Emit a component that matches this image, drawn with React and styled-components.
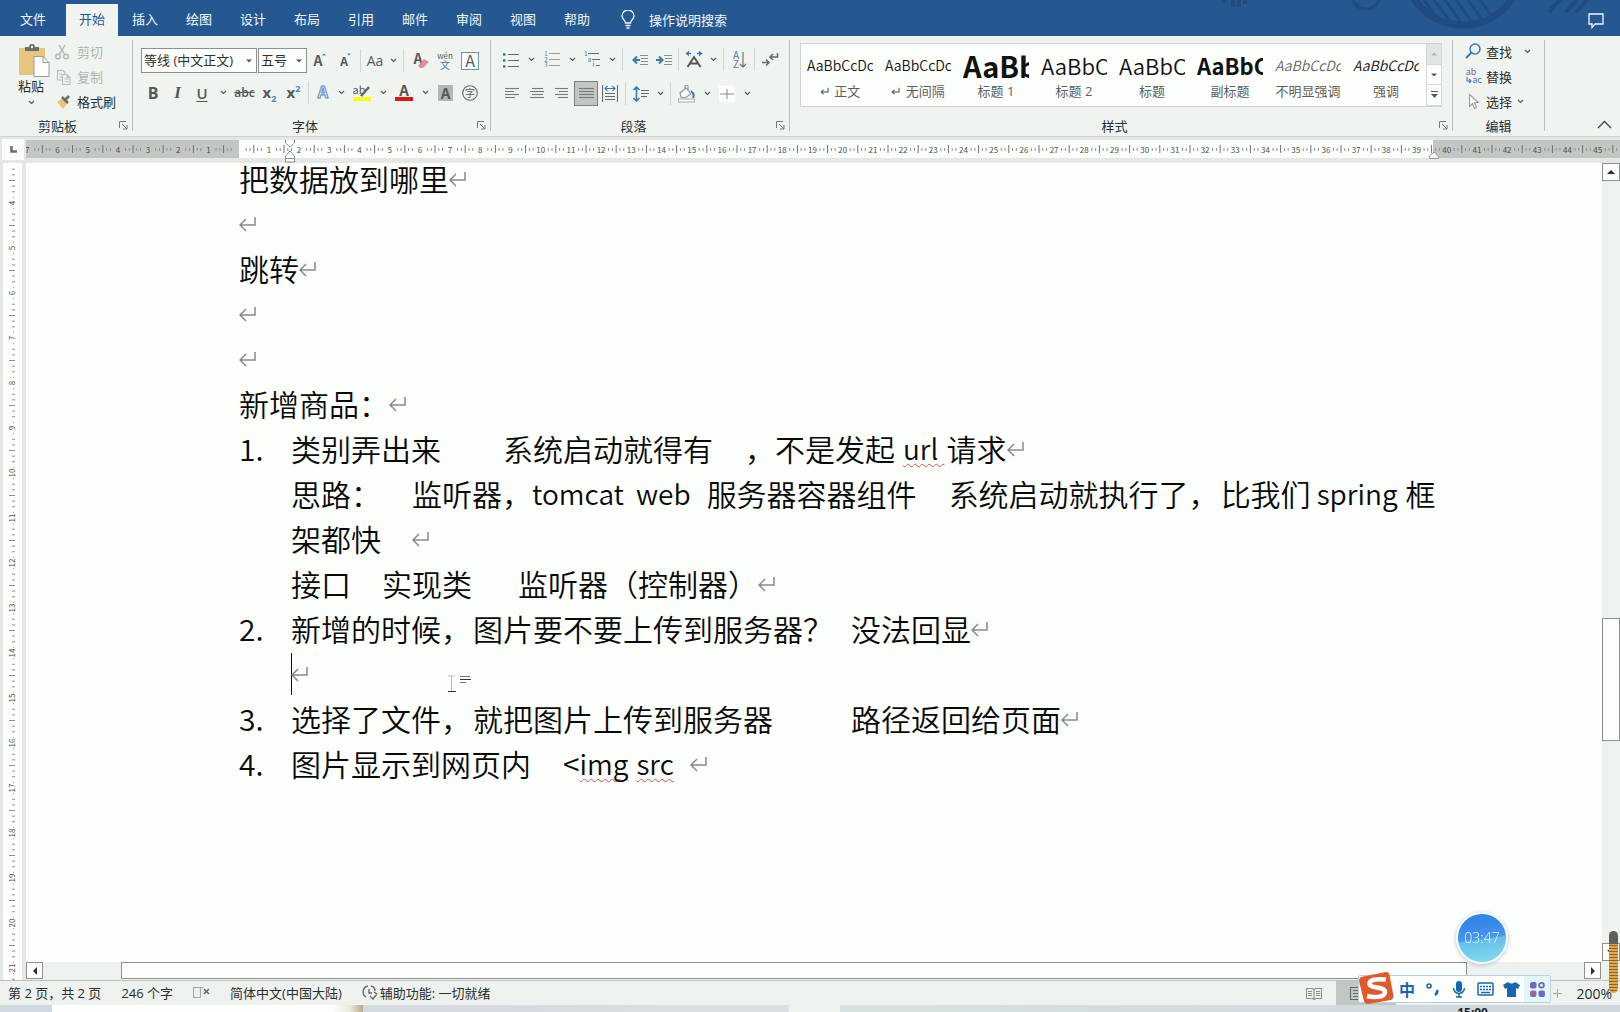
import React from 'react';
import styled, { createGlobalStyle, css } from 'styled-components';

const CJK = '"Noto Sans CJK SC", "Noto Sans", sans-serif';
const UI = '"Open Sans", "Noto Sans CJK SC", sans-serif';

const Global = createGlobalStyle`
  *, *::before, *::after { box-sizing: border-box; }
  body { margin: 0; background: #fdfffd; font-family: ${UI}; font-size: 13px; color: #2b2f2d; overflow: hidden; }
  button { font: inherit; color: inherit; background: none; border: 0; padding: 0; margin: 0; }
  svg { display: block; flex: none; }
`;

const Shell = styled.div`
  display: flex;
  flex-direction: column;
  height: 100vh;
  overflow: hidden;
`;

/* ---------- title / tabs ---------- */
const Header = styled.header`
  position: relative;
  display: flex;
  align-items: flex-end;
  justify-content: space-between;
  height: 36px;
  flex: none;
  background: #255791;
  color: #f1f7fb;
`;
const Decor = styled.svg`
  position: absolute;
  right: 0;
  top: 0;
`;
const Tabs = styled.nav`
  display: flex;
  align-items: stretch;
  height: 32px;
`;
const Tab = styled.button`
  width: ${(p) => p.$w || 54}px;
  line-height: 30px;
  padding-bottom: 2px;
  ${(p) => p.$active && css`background: #f0f4f1; color: #255791;`}
`;
const Tell = styled.button`
  display: flex;
  align-items: center;
  gap: 14px;
  padding: 0 0 2px 17px;
`;
const CommentButton = styled.button`
  position: relative;
  padding: 0 16px 7px 0;
`;

/* ---------- ribbon ---------- */
const Ribbon = styled.section`
  display: flex;
  height: 101px;
  flex: none;
  padding: 4px 0 5px;
  background: #f0f4f1;
  border-bottom: 1px solid #cfd3d0;
`;
const Group = styled.div`
  display: flex;
  flex-direction: column;
  flex: 0 0 ${(p) => p.$w}px;
  min-width: 0;
  padding-left: ${(p) => p.$pad || 0}px;
  border-right: 1px solid #b9bdba;
`;
const GroupBody = styled.div`
  display: flex;
  flex-direction: ${(p) => (p.$col ? 'column' : 'row')};
  flex: 1;
`;
const GroupFoot = styled.div`
  display: flex;
  align-items: center;
  height: 11px;
  margin-left: -${(p) => p.$pad || 0}px;
  padding-right: 4px;
  span { flex: 1; text-align: center; line-height: 18px; }
`;
const ToolRow = styled.div`
  display: flex;
  align-items: center;
  height: 25px;
  margin-top: ${(p) => p.$top}px;
`;
const Tool = styled.button`
  display: flex;
  align-items: center;
  justify-content: center;
  width: ${(p) => p.$w || 24}px;
  height: 25px;
  flex: none;
  color: #555957;
  font-size: ${(p) => p.$size || 16}px;
  line-height: 20px;
  ${(p) => p.$selected && css`background: #c3c7c4; border: 1px solid #7d817e;`}
`;
const Sep = styled.span`
  width: 1px;
  height: 23px;
  margin: 0 3px;
  background: #d3d7d4;
  flex: none;
`;
const Bold = styled.b`font-size: 16px;`;
const Ital = styled.i`font: italic bold 17px "Liberation Serif", serif;`;
const Under = styled.u`font-weight: 600; font-size: 15px; text-underline-offset: 2px;`;
const Struck = styled.s`font-size: 12px; font-weight: 600;`;
const Script = styled.span`
  font-weight: 700;
  font-size: 15px;
  line-height: 16px;
  padding-bottom: 2px;
  sub, sup { font-size: 9px; line-height: 0; color: #4a84bd; }
`;
const Combo = styled.div`
  display: flex;
  align-items: center;
  width: ${(p) => p.$w}px;
  height: 25px;
  margin-right: ${(p) => p.$gap || 0}px;
  padding-right: 4px;
  border: 1px solid #8d918e;
  background: #fdfffd;
`;
const ComboSelect = styled.select`
  appearance: none;
  flex: 1;
  min-width: 0;
  height: 23px;
  padding: 0 0 1px 2px;
  border: 0;
  background: none;
  font: 13px ${UI};
  color: #2b2f2d;
`;

const PasteButton = styled.button`
  display: flex;
  flex-direction: column;
  align-items: center;
  width: 38px;
  padding-top: 4px;
  span { line-height: 19px; padding-right: 6px; }
  svg:last-child { margin: 4px 6px 0 0; }
`;
const Stack = styled.div`
  display: flex;
  flex-direction: column;
  margin-top: -1px;
`;
const MiniButton = styled.button`
  display: flex;
  align-items: center;
  gap: ${(p) => p.$gap || 4}px;
  height: 25px;
  white-space: nowrap;
  color: ${(p) => (p.$off ? '#b1b5b2' : '#2b2f2d')};
  svg:last-child:not(:first-child) { margin-left: ${(p) => p.$chev || 0}px; }
`;

const Gallery = styled.div`
  display: flex;
  height: 64px;
  width: 642px;
  margin-top: 3px;
  background: #fdfffd;
  border: 1px solid #cfd3d0;
  border-right: 0;
`;
const GalleryItems = styled.div`
  display: flex;
  flex: 1;
  overflow: hidden;
`;
const StyleCard = styled.button`
  display: flex;
  flex-direction: column;
  align-items: center;
  width: 78px;
  flex: none;
  padding-top: 5px;
  color: #5c605d;
  small { font-size: 13px; line-height: 18px; white-space: nowrap; }
`;
const Sample = styled.span`
  display: block;
  width: 66px;
  height: 33px;
  overflow: hidden;
  text-align: left;
  white-space: nowrap;
  font-family: ${CJK};
  font-size: ${(p) => p.$size}px;
  font-weight: ${(p) => p.$weight || 350};
  font-style: ${(p) => (p.$italic ? 'italic' : 'normal')};
  line-height: 32px;
  color: ${(p) => p.$color || '#111'};
`;
const GallerySide = styled.div`
  display: flex;
  flex-direction: column;
  width: 16px;
`;
const SideButton = styled.button`
  display: flex;
  flex: 1;
  align-items: center;
  justify-content: center;
  border: 1px solid #d6dad7;
  border-width: 0 1px 1px;
  background: ${(p) => (p.$off ? '#e2e6e3' : '#fdfffd')};
`;
const RibbonEnd = styled.div`
  display: flex;
  flex: 1;
  align-items: flex-end;
  justify-content: flex-end;
  padding: 0 8px 0 0;
  button { height: 14px; }
`;

/* ---------- workspace ---------- */
const RulerBar = styled.div`
  display: flex;
  height: 26px;
  flex: none;
  padding: 3px 0 0 2px;
  background: #e4e8e5;
  overflow: hidden;
`;
const TabStop = styled.button`
  display: flex;
  align-items: center;
  justify-content: center;
  width: 22px;
  height: 21px;
  margin: -1px 2px 0 0;
  flex: none;
  background: #fdfffd;
`;
const RulerTrack = styled.div`
  flex: 1;
  min-width: 0;
  height: 23px;
  overflow: hidden;
`;
const Work = styled.div`
  display: flex;
  flex: 1;
  min-height: 0;
`;
const SideRuler = styled.aside`
  width: 26px;
  flex: none;
  padding-left: 3px;
  background: #e4e8e5;
  overflow: hidden;
`;
const Center = styled.div`
  display: flex;
  flex-direction: column;
  flex: 1;
  min-width: 0;
`;
const Page = styled.main`
  flex: 1;
  min-height: 0;
  overflow: hidden;
  padding-left: 213px;
  background: #fdfffd;
`;
const Story = styled.div`
  margin-top: -7px;
  font-family: ${CJK};
  font-size: 30px;
  font-weight: 350;
  color: #080a08;
`;
const Line = styled.div`
  display: flex;
  align-items: center;
  height: 45px;
  line-height: 45px;
  white-space: pre;
  padding-left: ${(p) => (p.$cont ? 52 : 0)}px;
`;
const Num = styled.span`
  width: 52px;
  flex: none;
`;
const Gap = styled.span`
  width: ${(p) => p.$w}px;
  flex: none;
`;
const Latin = styled.span`
  font-size: 28px;
  ${(p) => p.$wavy && css`
    text-decoration: underline wavy #c9504c 1px;
    text-underline-offset: 3px;
    text-decoration-skip-ink: none;
  `}
`;
const Caret = styled.span`
  width: 1px;
  height: 42px;
  margin-right: -1px;
  background: #101210;
`;
const Pointer = styled.svg`
  margin-left: 140px;
  margin-top: 20px;
`;
const VScroll = styled.div`
  display: flex;
  flex-direction: column;
  justify-content: space-between;
  width: 18px;
  flex: none;
  padding: 0 0 19px;
  background: #eef2ef;
`;
const VTrack = styled.div`
  flex: 1;
  padding-top: 437px;
`;
const VThumb = styled.div`
  height: 123px;
  border: 1px solid #8d918e;
  background: #fdfffd;
`;
const HScroll = styled.div`
  display: flex;
  height: 18px;
  flex: none;
  padding-right: 1px;
  background: #eef2ef;
`;
const HTrack = styled.div`
  flex: 1;
  padding: 0 117px 0 78px;
`;
const HThumb = styled.div`
  height: 17px;
  border: 1px solid #8d918e;
  background: #fdfffd;
`;
const ArrowButton = styled.button`
  display: flex;
  align-items: center;
  justify-content: center;
  width: ${(p) => (p.$v ? 18 : 17)}px;
  height: ${(p) => (p.$v ? 18 : 17)}px;
  flex: none;
  border: 1px solid #8d918e;
  background: #fdfffd;
`;

/* ---------- status bar ---------- */
const Status = styled.footer`
  display: flex;
  align-items: center;
  height: 25px;
  flex: none;
  padding: 0 8px;
  background: #eef2ef;
  border-top: 1px solid #bcc0bd;
  white-space: nowrap;
`;
const StatusItem = styled.button`
  display: flex;
  align-items: center;
  gap: 2px;
  padding-bottom: 1px;
  margin-right: ${(p) => p.$gap || 20}px;
`;
const ViewButton = styled.button`
  display: flex;
  align-items: center;
  width: ${(p) => (p.$on ? 60 : 30)}px;
  height: 24px;
  padding-left: ${(p) => (p.$on ? 14 : 0)}px;
  background: ${(p) => (p.$on ? '#c3c7c4' : 'none')};
`;
const Push = styled.span`flex: 1;`;
const Zoom = styled.span`
  display: flex;
  align-items: center;
  justify-content: flex-end;
  gap: 14px;
  width: 216px;
  font-size: 14px;
`;
const Taskbar = styled.div`
  display: flex;
  height: 7px;
  flex: none;
  overflow: hidden;
  background: #d3d9e0;
`;
const TaskPart = styled.div`
  flex: ${(p) => (p.$w ? `0 0 ${p.$w}px` : '1')};
  background: ${(p) => p.$bg};
`;
const TaskClock = styled.time`
  display: block;
  padding: 0 132px 0 0;
  text-align: right;
  font: bold 12px/16px "Noto Sans", sans-serif;
  color: #222;
`;

/* ---------- floating widgets ---------- */
const Timer = styled.div`
  position: fixed;
  right: 112px;
  bottom: 48px;
  width: 52px;
  height: 52px;
  border: 2px solid #eefaff;
  border-radius: 50%;
  background: linear-gradient(172deg, #3585ea 0 20%, #4896ee 50%, #65c0ea 54%, #86dcec 100%);
  box-shadow: 0 1px 4px rgba(60, 90, 110, 0.35);
  color: #eefaff;
  font: 300 14px/47px "Open Sans", sans-serif;
  text-align: center;
`;
const Ime = styled.div`
  position: fixed;
  right: 69px;
  bottom: 9px;
  display: flex;
  align-items: center;
  height: 28px;
  padding-left: 35px;
  border: 1px solid #b9cfe3;
  border-radius: 2px;
  background: #fdfffd;
  color: #1467b0;
`;
const ImeKey = styled.button`
  display: flex;
  align-items: center;
  justify-content: center;
  width: 26px;
  height: 26px;
  font-size: 16px;
  font-weight: 700;
  background: ${(p) => (p.$tint ? '#e2f6f6' : 'none')};
`;
const ImeLogo = styled.svg`
  position: absolute;
  left: -1px;
  top: -5px;
`;
const Gauge = styled.div`
  position: fixed;
  right: 2px;
  bottom: 19px;
  width: 9px;
  height: 62px;
  border-radius: 5px;
  background: linear-gradient(#5e605f 0 13px, transparent 13px),
    repeating-linear-gradient(#e0a84c 0 2px, #8c6528 2px 3px);
`;

/* ---------- drawings ---------- */
const Chev = ({ c = '#555957' }) => (
  <svg width="7" height="5" viewBox="0 0 7 5"><path d="M1 1l2.5 2.5L6 1" fill="none" stroke={c} strokeWidth="1.1" /></svg>
);
const Tri = ({ d = 'down', c = '#2b2f2d', s = 8 }) => {
  const paths = { down: 'M0 2h8L4 6z', up: 'M0 6h8L4 2z', left: 'M6 0v8L2 4z', right: 'M2 0v8l4-4z' };
  return <svg width={s} height={s} viewBox="0 0 8 8"><path d={paths[d]} fill={c} /></svg>;
};
const ChevTool = ({ w = 14 }) => <Tool $w={w} aria-label="更多"><Chev /></Tool>;
const Launcher = () => (
  <button aria-label="对话框">
    <svg width="9" height="9" viewBox="0 0 9 9" fill="none" stroke="#777b78"><path d="M.5 7V.5H7M3 3l5 5M8 4v4H4" /></svg>
  </button>
);
const Mark = () => (
  <svg width="17" height="16" viewBox="0 0 17 16" fill="none" stroke="#868a87" strokeWidth="1.5">
    <path d="M16 1v8H1M7 3L1 9l6 6" />
  </svg>
);
const Icon = ({ w = 17, h = 17, children }) => (
  <svg width={w} height={h} viewBox={`0 0 ${w} ${h}`} fill="none" stroke="#666a67" strokeWidth="1.1" fontFamily={CJK}>{children}</svg>
);
const Glyph = ({ x, y, s, c = '#555957', b, o, children }) => (
  <text x={x} y={y} fontSize={s} fill={o ? 'none' : c} stroke={o ? c : 'none'} fontWeight={b ? 700 : 400} textAnchor="middle">{children}</text>
);
const Lines = ({ rows }) => (
  <Icon w={15} h={15}>{rows.map(([a, b], i) => <path key={i} d={`M${a} ${i * 3 + 2.5}H${b}`} stroke="#777b78" />)}</Icon>
);

const STEP = 30.2;
const ZERO = 212.7;
const HRuler = () => {
  const items = [];
  for (let i = -56; i <= 370; i++) {
    const x = ZERO + (i * STEP) / 8;
    const m = ((i % 8) + 8) % 8;
    if (m === 0) {
      if (i !== 0) items.push(<text key={i} x={x} y="12.5" fontSize="8" fill="#4c504d" textAnchor="middle">{Math.abs(i / 8)}</text>);
    } else if (m === 4) items.push(<path key={i} d={`M${x} 5v8`} stroke="#6d716e" />);
    else if (m !== 1 && m !== 7) items.push(<path key={i} d={`M${x} 8v3`} stroke="#8d918e" />);
  }
  return (
    <svg width="1594" height="23" fontFamily={CJK}>
      <rect width="1594" height="18" fill="#c3c7c4" />
      <rect x="213" width="1194" height="18" fill="#fdfffd" />
      {items}
      <g fill="#fdfffd" stroke="#8d918e">
        <path d="M259.500 -1h9v4l-4.500 4-4.500-4z" />
        <path d="M259.500 18v-2l4.500-5 4.500 5v6h-9zM259.500 18.500h9" />
        <path d="M1403.500 18v-2l4.500-4 4.500 4v2.500h-9z" />
      </g>
    </svg>
  );
};
const VRuler = () => {
  const items = [];
  for (let i = 26; i <= 170; i++) {
    const y = 40 + ((i - 32) * 45) / 8;
    const m = i % 8;
    if (m === 0) items.push(<text key={i} transform={`translate(12 ${y}) rotate(-90)`} fontSize="8" fill="#4c504d" textAnchor="middle">{i / 8}</text>);
    else if (m === 4) items.push(<path key={i} d={`M6 ${y}h6`} stroke="#8d918e" />);
    else if (m !== 1 && m !== 7) items.push(<path key={i} d={`M9 ${y}h3`} stroke="#8d918e" />);
    else items.push(<path key={i} d={`M10 ${y}h1`} stroke="#8d918e" />);
  }
  return (
    <svg width="19" height="817" fontFamily={CJK}>
      <rect width="19" height="817" fill="#fdfffd" />
      {items}
    </svg>
  );
};

const styles = [
  ['AaBbCcDc', '↵ 正文', { $size: 14 }],
  ['AaBbCcDc', '↵ 无间隔', { $size: 14 }],
  ['AaBb', '标题 1', { $size: 29, $weight: 700 }],
  ['AaBbC', '标题 2', { $size: 22 }],
  ['AaBbC', '标题', { $size: 22 }],
  ['AaBbC', '副标题', { $size: 22, $weight: 700 }],
  ['AaBbCcDc', '不明显强调', { $size: 14, $italic: true, $color: '#666' }],
  ['AaBbCcDc', '强调', { $size: 14, $italic: true }],
];

export default function App() {
  return (
    <Shell>
      <Global />
      <Header>
        <Decor width="420" height="36" fill="none" stroke="#1f4b80" aria-hidden="true">
          <circle cx="263" cy="-34" r="59" strokeWidth="7" />
          <path d="M224 0l16 22M234 0l18 24M245 0l17 24M256 0l17 24M268 0l15 21M280 0l12 17" strokeWidth="3" />
          <circle cx="166" cy="-5" r="14" strokeWidth="3" />
          <path d="M33 0v7M39 0v7M45 0v4M24 0v3M349 12l14-16M366 12l18-20M376 12l18-20" strokeWidth="4" />
        </Decor>
        <Tabs>
          <Tab $w={66}>文件</Tab>
          <Tab $w={52} $active>开始</Tab>
          {['插入', '绘图', '设计', '布局', '引用', '邮件', '审阅', '视图', '帮助'].map((t) => <Tab key={t}>{t}</Tab>)}
          <Tell>
            <svg width="14" height="19" viewBox="0 0 14 19" fill="none" stroke="#f1f7fb" strokeWidth="1.3">
              <path d="M4.500 13C4.500 10 1 9.500 1 6a6 6 0 0 1 12 0c0 3.500-3.500 4-3.500 7zM4.500 15.500h5M5.500 18h3" />
            </svg>
            <span>操作说明搜索</span>
          </Tell>
        </Tabs>
        <CommentButton aria-label="批注">
          <svg width="16" height="17" viewBox="0 0 16 17" fill="none" stroke="#f1f7fb" strokeWidth="1.3"><path d="M1 2h14v10H7l-3 3.500V12H1z" /></svg>
        </CommentButton>
      </Header>

      <Ribbon>
        <Group $w={133} $pad={15}>
          <GroupBody>
            <PasteButton>
              <svg width="32" height="33" viewBox="0 0 32 33">
                <rect x="1" y="4" width="26" height="27" fill="#e6c57f" />
                <path d="M7 7V3h4a3 3 0 0 1 6 0h4v4z" fill="#6a6e6b" /><circle cx="14" cy="3" r="1.200" fill="#f0f4f1" />
                <path d="M16 12.500h9l6 6v14H16z" fill="#fdfffd" stroke="#9a9e9b" /><path d="M25 12.500v6h6" fill="none" stroke="#9a9e9b" />
              </svg>
              <span>粘贴</span>
              <Chev />
            </PasteButton>
            <Stack>
              <MiniButton $off $gap={6}>
                <Icon w={18} h={16}><g stroke="#b1b5b2" strokeWidth="1.400"><path d="M6 1l6 10M12 1L6 11" /><circle cx="5" cy="12.500" r="2.300" /><circle cx="13" cy="12.500" r="2.300" /></g></Icon>剪切
              </MiniButton>
              <MiniButton $off $gap={6}>
                <Icon w={18} h={16}><g stroke="#b9bdba"><path d="M9 11H4.500V1.500H10l2 2V5M6 5h3M6 8h3" /><path d="M9.500 5.500H14l3 3v7H9.500zM14 5.500v3h3M11.500 10h4M11.500 12.500h4" /></g></Icon>复制
              </MiniButton>
              <MiniButton $gap={6}>
                <Icon w={18} h={16}><path d="M4 8l6-4 5 5-5 6z" fill="#e6c57f" stroke="none" /><path d="M9 3l6 6M12 6l4-4" stroke="#6a6e6b" strokeWidth="2.600" /></Icon>格式刷
              </MiniButton>
            </Stack>
          </GroupBody>
          <GroupFoot $pad={19}><span>剪贴板</span><Launcher /></GroupFoot>
        </Group>

        <Group $w={358} $pad={8}>
          <GroupBody $col>
            <ToolRow $top={8}>
              <Combo $w={116} $gap={1}>
                <ComboSelect aria-label="字体"><option>等线 (中文正文)</option></ComboSelect><Tri s={6} c="#555957" />
              </Combo>
              <Combo $w={49}>
                <ComboSelect aria-label="字号"><option>五号</option></ComboSelect><Tri s={6} c="#555957" />
              </Combo>
              <Tool $w={25} aria-label="增大字号"><Icon><Glyph x={7} y={14} s={14} b>A</Glyph><path d="M11 3.500l2-2 2 2" fill="#4a84bd" stroke="none" /></Icon></Tool>
              <Tool $w={25} aria-label="减小字号"><Icon><Glyph x={8} y={14} s={12} b>A</Glyph><path d="M11 1.500l2 2 2-2" fill="#4a84bd" stroke="none" /></Icon></Tool>
              <Sep />
              <Tool $w={22} $size={14}>Aa</Tool><ChevTool />
              <Sep />
              <Tool $w={26} aria-label="清除格式"><Icon><Glyph x={6} y={12} s={14} b>A</Glyph><path d="M6 14l6-7 5 3-6 6H8z" fill="#e58a9b" stroke="none" /></Icon></Tool>
              <Tool $w={24} aria-label="拼音指南"><Icon w={18} h={20}><Glyph x={9} y={8} s={8}>wén</Glyph><Glyph x={9} y={18} s={10} c="#3c78b4">文</Glyph></Icon></Tool>
              <Tool $w={26} aria-label="字符边框"><Icon w={18} h={18}><rect x=".5" y=".5" width="17" height="17" stroke="#6a93bd" fill="#fdfffd" /><Glyph x={9} y={15} s={16}>A</Glyph></Icon></Tool>
            </ToolRow>
            <ToolRow $top={7}>
              <Tool><Bold>B</Bold></Tool>
              <Tool $w={25}><Ital>I</Ital></Tool>
              <Tool><Under>U</Under></Tool>
              <ChevTool w={18} />
              <Tool $w={25}><Struck>abc</Struck></Tool>
              <Tool $w={25}><Script>x<sub>2</sub></Script></Tool>
              <Tool $w={23}><Script>x<sup>2</sup></Script></Tool>
              <Sep />
              <Tool $w={22} aria-label="文本效果"><Icon w={16}><Glyph x={8} y={14} s={16} c="#5c93cb" o b>A</Glyph></Icon></Tool>
              <ChevTool />
              <Tool $w={28} aria-label="突出显示"><Icon w={18} h={18}><Glyph x={6} y={10} s={11}>ab</Glyph><path d="M8 12l8-9" strokeWidth="2.600" /><rect y="13" width="18" height="4" fill="#fbfb0a" stroke="none" /></Icon></Tool>
              <ChevTool />
              <Tool $w={28} aria-label="字体颜色"><Icon w={18} h={18}><Glyph x={9} y={12} s={15} b>A</Glyph><rect y="13" width="18" height="4" fill="#e31414" stroke="none" /></Icon></Tool>
              <ChevTool />
              <Tool $w={26} aria-label="字符底纹"><Icon w={15} h={16}><rect width="15" height="16" fill="#b3b7b4" stroke="none" /><Glyph x={7.5} y={14} s={15} b>A</Glyph></Icon></Tool>
              <Tool $w={24} aria-label="带圈字符"><Icon w={16} h={16}><circle cx="8" cy="8" r="7.300" /><Glyph x={8} y={12} s={10}>字</Glyph></Icon></Tool>
            </ToolRow>
          </GroupBody>
          <GroupFoot $pad={8}><span>字体</span><Launcher /></GroupFoot>
        </Group>

        <Group $w={299} $pad={8}>
          <GroupBody $col>
            <ToolRow $top={7}>
              <Tool aria-label="项目符号"><Icon w={16} h={16}><path d="M5 2.500h11M5 8.500h11M5 14.500h11" /><path d="M0 2.500h2.500M0 8.500h2.500M0 14.500h2.500" stroke="#3c78b4" strokeWidth="2.500" /></Icon></Tool>
              <ChevTool w={16} />
              <Tool $w={26} aria-label="编号"><Icon w={16} h={17}><path d="M5 2.500h11M5 8.500h11M5 14.500h11" stroke="#9a9e9b" /><Glyph x={2} y={5} s={6} c="#3c78b4">1</Glyph><Glyph x={2} y={11} s={6} c="#3c78b4">2</Glyph><Glyph x={2} y={16} s={6} c="#3c78b4">3</Glyph></Icon></Tool>
              <ChevTool />
              <Tool $w={26} aria-label="多级列表"><Icon w={16} h={17}><path d="M4 2.500h11M8 8.500h8M12 14.500h4" /><Glyph x={2} y={5} s={6}>1</Glyph><Glyph x={5.5} y={11} s={6} c="#3c78b4">a</Glyph><Glyph x={9.5} y={16} s={6}>i</Glyph></Icon></Tool>
              <ChevTool />
              <Sep />
              <Tool $w={27} aria-label="减少缩进"><Icon w={16} h={12}><path d="M8 1.500h8M9 4.500h7M9 7.500h7M8 10.500h8" stroke="#8d918e" /><path d="M8 6H2M5 2.500L1.500 6 5 9.500" stroke="#3c78b4" strokeWidth="2" /></Icon></Tool>
              <Tool $w={22} aria-label="增加缩进"><Icon w={16} h={12}><path d="M8 1.500h8M9 4.500h7M9 7.500h7M8 10.500h8" stroke="#8d918e" /><path d="M0 6h6M3 2.500L6.500 6 3 9.500" stroke="#3c78b4" strokeWidth="2" /></Icon></Tool>
              <Sep />
              <Tool aria-label="中文版式"><Icon w={18} h={17}><path d="M2.500 16L9 6l6.500 10M5 12.500h8" stroke="#555957" strokeWidth="2" /><path d="M6 2.500H1.500M4 .5l-2.500 2 2.500 2M12 2.500h4.500M14 .5l2.500 2-2.500 2" stroke="#3c78b4" strokeWidth="1.400" /></Icon></Tool>
              <ChevTool />
              <Sep />
              <Tool aria-label="排序"><Icon w={14} h={18}><Glyph x={4} y={8} s={10} c="#3c78b4">A</Glyph><Glyph x={4} y={17} s={10} c="#9660a8">Z</Glyph><path d="M11 1v15M8 13l3 3 3-3" /></Icon></Tool>
              <Sep />
              <Tool aria-label="显示编辑标记"><Icon w={17} h={15}><path d="M15.500 1v4H8M11 2L8 5l3 3M0 10.500h7M4 7.500l3 3-3 3" strokeWidth="1.500" /></Icon></Tool>
            </ToolRow>
            <ToolRow $top={9}>
              <Tool $w={26} aria-label="左对齐"><Lines rows={[[0, 14], [0, 9], [0, 14], [0, 10]]} /></Tool>
              <Tool aria-label="居中"><Lines rows={[[2, 13], [0, 14], [2, 13], [0, 14]]} /></Tool>
              <Tool $w={25} aria-label="右对齐"><Lines rows={[[1, 14], [5, 14], [1, 14], [4, 14]]} /></Tool>
              <Tool $selected aria-label="两端对齐"><Lines rows={[[0, 15], [0, 15], [0, 15], [0, 15]]} /></Tool>
              <Tool aria-label="分散对齐"><Icon w={16} h={17}><path d="M.5 0v17M15.500 0v17M3 8.500h10M3 11.500h10M3 14.500h10" /><path d="M3 3.500h10M5.500 1L3 3.500 5.500 6M10.500 1L13 3.500 10.500 6" stroke="#3c78b4" /></Icon></Tool>
              <Sep />
              <Tool aria-label="行距"><Icon w={16} h={16}><path d="M8 4.500h8M8 7.500h8M8 10.500h6" /><path d="M3.500 1v14M.5 4l3-3 3 3M.5 12l3 3 3-3" stroke="#3c78b4" strokeWidth="1.600" /></Icon></Tool>
              <ChevTool />
              <Sep />
              <Tool $w={26} aria-label="底纹"><Icon w={18} h={18}><path d="M2 8l6-5 5 6-6 4-4-1zM7 5V1.500a1.500 1.500 0 0 1 3 0V5" stroke="#8d918e" fill="#fdfffd" /><path d="M13 6q4 3 2 7" stroke="#3c78b4" strokeWidth="2" /><rect x=".5" y="14" width="16" height="3" fill="#fdfffd" stroke="#b1b5b2" /></Icon></Tool>
              <ChevTool />
              <Tool $w={26} aria-label="边框"><Icon w={16} h={16}><rect width="16" height="16" fill="#fdfffd" stroke="none" /><path d="M8 3v10M1 8h14" stroke="#8d918e" /></Icon></Tool>
              <ChevTool />
            </ToolRow>
          </GroupBody>
          <GroupFoot $pad={8}><span>段落</span><Launcher /></GroupFoot>
        </Group>

        <Group $w={663} $pad={10}>
          <GroupBody>
            <Gallery>
              <GalleryItems>
                {styles.map(([s, n, p]) => (
                  <StyleCard key={n}><Sample {...p}>{s}</Sample><small>{n}</small></StyleCard>
                ))}
              </GalleryItems>
              <GallerySide>
                <SideButton $off aria-label="上一行"><Tri d="up" s={6} c="#b1b5b2" /></SideButton>
                <SideButton aria-label="下一行"><Tri s={6} c="#555957" /></SideButton>
                <SideButton aria-label="其他"><svg width="7" height="8" viewBox="0 0 7 8"><path d="M0 0h7v1H0zM0 3h7L3.500 7z" fill="#555957" /></svg></SideButton>
              </GallerySide>
            </Gallery>
          </GroupBody>
          <GroupFoot $pad={10}><span>样式</span><Launcher /></GroupFoot>
        </Group>

        <Group $w={92} $pad={12}>
          <GroupBody>
            <Stack>
              <MiniButton $chev={8}>
                <Icon><circle cx="10" cy="6" r="5" stroke="#3c78b4" strokeWidth="1.500" /><path d="M6.500 9.500L1 15" stroke="#3c78b4" strokeWidth="2" /></Icon>查找<Chev />
              </MiniButton>
              <MiniButton>
                <Icon><Glyph x={6} y={7} s={9} c="#8a5fa5">ab</Glyph><Glyph x={12} y={15} s={9} c="#3c78b4">ac</Glyph><path d="M2 9v4h4M4 11l2 2-2 2" stroke="#3c78b4" /></Icon>替换
              </MiniButton>
              <MiniButton $chev={1}>
                <Icon><path d="M4.500 1.500v12l3-3 2 5 2-1-2-5h4z" stroke="#9a9e9b" fill="#fdfffd" /></Icon>选择<Chev />
              </MiniButton>
            </Stack>
          </GroupBody>
          <GroupFoot $pad={8}><span>编辑</span></GroupFoot>
        </Group>
        <RibbonEnd>
          <button aria-label="折叠功能区"><svg width="15" height="9" viewBox="0 0 15 9" fill="none" stroke="#3f4341" strokeWidth="1.300"><path d="M1 8l6.500-6.500L14 8" /></svg></button>
        </RibbonEnd>
      </Ribbon>

      <RulerBar>
        <TabStop aria-label="制表符"><svg width="7" height="7" viewBox="0 0 7 7"><path d="M1.500 0v5.500H7" fill="none" stroke="#6a6e6b" strokeWidth="2.500" /></svg></TabStop>
        <RulerTrack><HRuler /></RulerTrack>
      </RulerBar>

      <Work>
        <SideRuler><VRuler /></SideRuler>
        <Center>
          <Page>
            <Story>
              <Line>把数据放到哪里<Mark /></Line>
              <Line><Mark /></Line>
              <Line>跳转<Mark /></Line>
              <Line><Mark /></Line>
              <Line><Mark /></Line>
              <Line>新增商品：<Mark /></Line>
              <Line><Num>1.</Num>类别弄出来<Gap $w={62} />系统启动就得有<Gap $w={32} />，不是发起<Gap $w={8} /><Latin $wavy>url </Latin><Gap $w={2} />请求<Mark /></Line>
              <Line $cont>思路：<Gap $w={31} />监听器，<Latin>tomcat</Latin><Gap $w={12} /><Latin>web</Latin><Gap $w={16} />服务器容器组件<Gap $w={32} />系统启动就执行了，<Gap $w={2} />比我们<Gap $w={6} /><Latin>spring</Latin><Gap $w={8} />框</Line>
              <Line $cont>架都快<Gap $w={31} /><Mark /></Line>
              <Line $cont>接口<Gap $w={31} />实现类<Gap $w={46} />监听器（控制器）<Mark /></Line>
              <Line><Num>2.</Num>新增的时候，<Gap $w={2} />图片要不要上传到服务器？<Gap $w={18} />没法回显<Mark /></Line>
              <Line $cont><Caret /><Mark />
                <Pointer width="24" height="18" viewBox="0 0 24 18" fill="none">
                  <path d="M0 1h7M3.500 1v15" stroke="#b5b9b6" /><path d="M0 16.500h8" stroke="#333" />
                  <path d="M12 1.500h10M12 7.500h6" stroke="#777" /><path d="M12 4.500h11" stroke="#333" />
                </Pointer>
              </Line>
              <Line><Num>3.</Num>选择了文件，<Gap $w={2} />就把图片上传到服务器<Gap $w={78} />路径返回给页面<Mark /></Line>
              <Line><Num>4.</Num>图片显示到网页内<Gap $w={32} />&lt;<Latin $wavy>img</Latin><Gap $w={8} /><Latin $wavy>src</Latin><Gap $w={16} /><Mark /></Line>
            </Story>
          </Page>
          <HScroll>
            <ArrowButton aria-label="向左滚动"><Tri d="left" /></ArrowButton>
            <HTrack><HThumb /></HTrack>
            <ArrowButton aria-label="向右滚动"><Tri d="right" /></ArrowButton>
          </HScroll>
        </Center>
        <VScroll>
          <ArrowButton $v aria-label="向上滚动"><Tri d="up" /></ArrowButton>
          <VTrack><VThumb /></VTrack>
          <ArrowButton $v aria-label="向下滚动"><Tri /></ArrowButton>
        </VScroll>
      </Work>

      <Status>
        <StatusItem>第 2 页，共 2 页</StatusItem>
        <StatusItem>246 个字</StatusItem>
        <StatusItem aria-label="校对"><Icon w={17} h={13}><path d="M7.500 11.500H.5V1.500h7v10M7.500 1.500h3" stroke="#a5a9a6" /><path d="M11 3l5 5M16 3l-5 5" strokeWidth="1.500" /></Icon></StatusItem>
        <StatusItem>简体中文(中国大陆)</StatusItem>
        <StatusItem>
          <Icon w={16} h={15}><path d="M6 1A6 6 0 0 0 4 12M9 1q4 1 4 5M7 4v4h3M8 11l3 3 4-5M12 7l3 2" strokeWidth="1.400" /></Icon>辅助功能: 一切就绪
        </StatusItem>
        <Push />
        <ViewButton aria-label="阅读视图"><Icon w={16} h={13}><path d="M.5 1.500h6l1.500 1 1.500-1h6v10h-6l-1.500 1-1.500-1h-6zM8 2v10M2 4.500h4M2 6.500h4M2 8.500h4M10 4.500h4M10 6.500h4M10 8.500h4" stroke="#8d918e" /></Icon></ViewButton>
        <ViewButton $on aria-label="页面视图"><Icon w={16} h={13}><path d="M.5.5h15v12H.500zM3 3.500h10M3 6.500h10M3 9.500h10" /></Icon></ViewButton>
        <Zoom>
          <svg width="9" height="9"><path d="M0 4.500h9M4.500 0v9" stroke="#a5a9a6" /></svg>
          <span>200%</span>
        </Zoom>
      </Status>
      <Taskbar>
        <TaskPart $w={52} $bg="#d2d8e1" />
        <TaskPart $w={311} $bg="linear-gradient(90deg,#fdfffd 0 90%,#e6ead8 96%,#b8a88a)" />
        <TaskPart $w={426} $bg="linear-gradient(90deg,#d3d9e0,#dcdfe2)" />
        <TaskPart $w={51} $bg="#eef2ef" />
        <TaskPart $bg="linear-gradient(90deg,#d5e1df,#cfd6de)"><TaskClock>15:00</TaskClock></TaskPart>
      </Taskbar>

      <Timer>03:47</Timer>
      <Ime>
        <ImeLogo width="36" height="34" viewBox="0 0 36 34">
          <path d="M3 6L28 1q3 0 3.500 3l4 21q0 3-3 4L10 33q-3 0-4-3L1 10q0-3 2-4z" fill="#e0592a" />
          <path d="M28 8.500Q12 7 11.500 12.500C11 18 28 15 27 21.500 26 27 15 26.500 9 25" fill="none" stroke="#fff" strokeWidth="4.500" />
        </ImeLogo>
        <ImeKey>中</ImeKey>
        <ImeKey aria-label="标点"><svg width="14" height="14" fill="none" stroke="#1467b0"><circle cx="3" cy="4" r="2" strokeWidth="1.600" /><path d="M11 8q1 3-2 5" strokeWidth="2.600" /></svg></ImeKey>
        <ImeKey aria-label="语音"><svg width="14" height="17"><rect x="4" width="6" height="11" rx="3" fill="#1467b0" /><path d="M1.500 7a5.500 5.500 0 0 0 11 0M7 13v3M4 16h6" fill="none" stroke="#1467b0" strokeWidth="1.500" /></svg></ImeKey>
        <ImeKey aria-label="软键盘"><svg width="17" height="14" fill="none" stroke="#1467b0" strokeWidth="1.500"><rect x="1" y="1" width="15" height="12" rx="1" /><path d="M3 4.500h11M3 7.500h11" strokeDasharray="2 1" /><path d="M4 10.500h9" /></svg></ImeKey>
        <ImeKey aria-label="皮肤"><svg width="17" height="15"><path d="M5 0q3.500 3 7 0l5 3-2 4-2-1v9H4V6L2 7 0 3z" fill="#1467b0" /></svg></ImeKey>
        <ImeKey $tint aria-label="工具箱"><svg width="15" height="15" fill="#6b68c9"><rect width="6.500" height="6.500" rx="2" /><circle cx="11.500" cy="3.300" r="2.400" fill="none" stroke="#6b68c9" strokeWidth="1.800" /><rect y="8.500" width="6.500" height="6.500" rx="2" fill="#93689f" /><rect x="8.500" y="8.500" width="6.500" height="6.500" rx="2" /></svg></ImeKey>
      </Ime>
      <Gauge />
    </Shell>
  );
}
